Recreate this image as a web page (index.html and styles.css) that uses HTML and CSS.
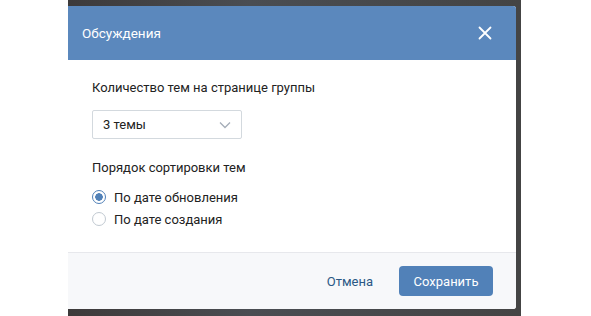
FILE: index.html
```html
<!DOCTYPE html>
<html lang="ru">

<head>
  <meta charset="UTF-8">
  <meta name="viewport" content="width=device-width, initial-scale=1.0">
  <title>Обсуждения</title>
  <link rel="stylesheet" href="styles.css">
</head>

<body>
  <div class="backdrop">
    <div class="modal">
      <div class="modal-head">
        <span class="title">Обсуждения</span>
        <svg class="close" width="14" height="14" viewBox="0 0 14 14">
          <path d="M1.5 1.5L12.5 12.5M12.5 1.5L1.5 12.5" stroke="#fff" stroke-width="1.8" stroke-linecap="round" />
        </svg>
      </div>
      <div class="modal-body">
        <p class="label">Количество тем на странице группы</p>
        <div class="select">
          <span>3 темы</span>
          <svg width="12" height="8" viewBox="0 0 12 8">
            <path d="M1 1.5L6 6.5L11 1.5" fill="none" stroke="#a5adb8" stroke-width="1.3" />
          </svg>
        </div>
        <p class="label sort">Порядок сортировки тем</p>
        <label class="radio checked"><i></i>По дате обновления</label>
        <label class="radio"><i></i>По дате создания</label>
      </div>
      <div class="modal-foot">
        <span class="cancel">Отмена</span>
        <button>Сохранить</button>
      </div>
    </div>
  </div>
</body>

</html>
```

FILE: styles.css
```css
body {
  margin: 0;
  background: #fff;
  font-family: Roboto, "Open Sans", "Liberation Sans", sans-serif;
}

.backdrop {
  margin-left: 68px;
  width: 453px;
  height: 316px;
  padding-top: 6px;
  box-sizing: border-box;
  background: linear-gradient(90deg, #3d3a3a, #4a4d52 40%, #444 100%);
}

.modal {
  width: 448px;
  height: 303px;
  background: #fff;
  border-radius: 0 3px 3px 0;
  overflow: hidden;
  display: flex;
  flex-direction: column;
}

.modal-head {
  height: 54px;
  background: #5b88bd;
  display: flex;
  align-items: center;
  justify-content: space-between;
  padding: 0 24px 0 14px;
}

.modal-head .title {
  color: #fff;
  font-size: 13.5px;
}

.modal-body {
  flex: 1;
  padding: 20px 24px 0;
}

.label {
  margin: 0;
  font-size: 13px;
  color: #222;
}

.select {
  width: 138px;
  height: 27px;
  margin-top: 15px;
  border: 1px solid #d3d9de;
  border-radius: 2px;
  display: flex;
  align-items: center;
  justify-content: space-between;
  padding: 0 10px 0 0;
}

.select span {
  font-size: 13px;
  color: #222;
  padding-left: 10px;
}

.sort {
  margin-top: 21px;
  margin-bottom: 11px;
}

.radio {
  display: flex;
  align-items: center;
  font-size: 13px;
  color: #222;
  height: 22px;
}

.radio i {
  width: 12px;
  height: 12px;
  border: 1px solid #c1c9d1;
  border-radius: 50%;
  margin: 0 8px 0 0;
  background: #fff;
}

.radio.checked i {
  border-color: #5181b8;
  background: radial-gradient(circle, #5181b8 3.5px, #fff 4px);
}

.modal-foot {
  height: 56px;
  background: #f7f8fa;
  border-top: 1px solid #e7e8ec;
  display: flex;
  align-items: center;
  justify-content: flex-end;
  padding-right: 23px;
}

.cancel {
  font-size: 13px;
  color: #2a5885;
  margin-right: 26px;
}

.modal-foot button {
  width: 94px;
  height: 30px;
  border: none;
  border-radius: 4px;
  background: #5181b8;
  color: #fff;
  font-family: inherit;
  font-size: 13px;
}
```
